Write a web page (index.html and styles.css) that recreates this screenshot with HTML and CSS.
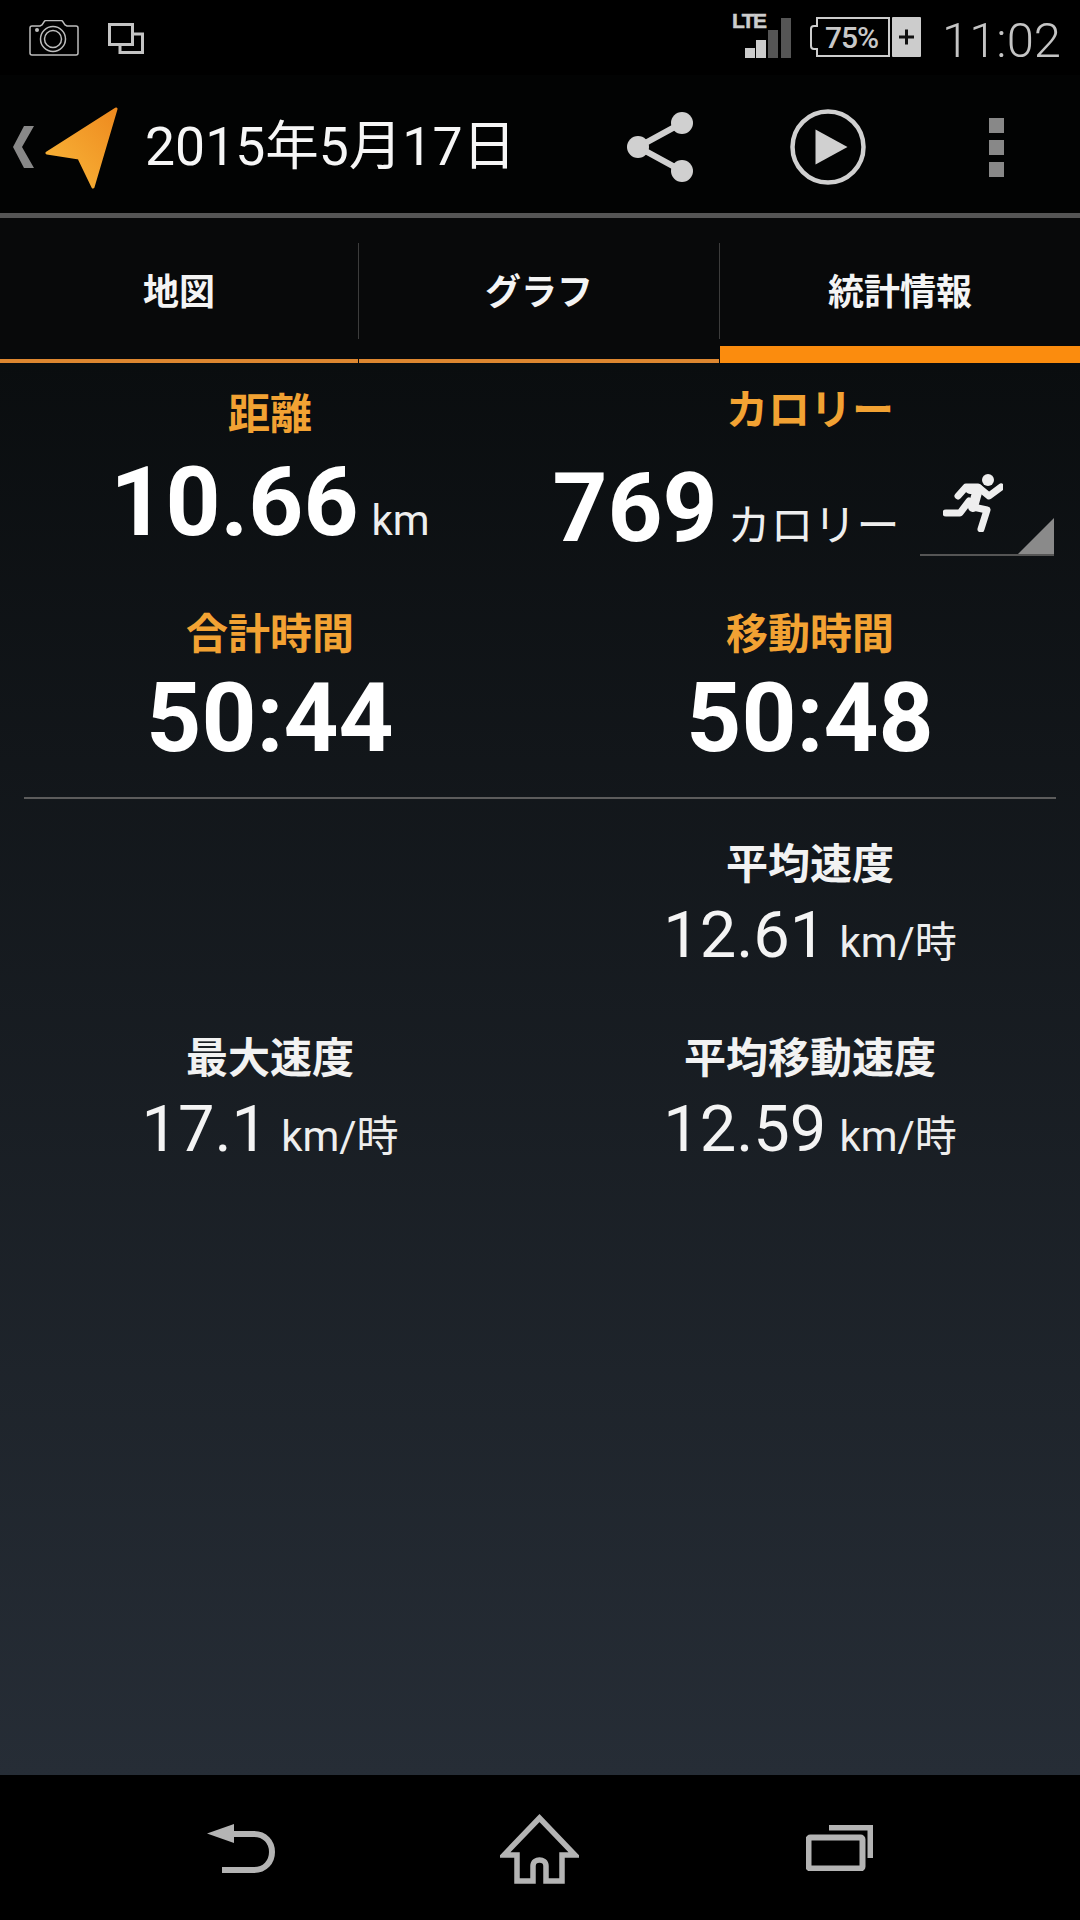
FILE: index.html
```html
<!DOCTYPE html>
<html lang="ja">
<head>
<meta charset="utf-8">
<title>統計情報</title>
<link rel="stylesheet" href="styles.css">
</head>
<body>
<div class="phone">
  <header class="status">
    <svg class="ic-camera" viewBox="0 0 50 36" width="50" height="36"><path d="M3 6h8l2-1 2-3q.5-1.500 2-1.500h15q1.500 0 2 1.500l2 3 2 1h9q2 0 2 2v25q0 2-2 2H3q-2 0-2-2V8q0-2 2-2z"/><circle cx="24" cy="19" r="12.500"/><circle cx="24" cy="19" r="8.500"/><circle class="dot" cx="8" cy="10" r="2"/></svg>
    <svg class="ic-windows" viewBox="0 0 36 31" width="36" height="31"><rect x="1.500" y="1.500" width="23" height="20"/><path d="M12 23v6.500h22.500V11H26"/></svg>
    <div class="status-right">
      <svg class="ic-signal" viewBox="-4 -8 64 54" width="64" height="54"><text x="0" y="16">LTE</text><rect class="on" x="13" y="36" width="10" height="10"/><rect class="on" x="24" y="28" width="10" height="18"/><rect class="off" x="36" y="18" width="10" height="28"/><rect class="off" x="49" y="6" width="10" height="40"/></svg>
      <svg class="ic-battery" viewBox="0 0 112 40" width="112" height="40"><path class="shell" d="M8 1h72v38H8v-7H5q-3 0-3-3V12q0-3 3-3h3z"/><text x="16" y="31">75%</text><rect class="plusbox" x="83" y="0" width="29" height="40" rx="1"/><path class="plus" d="M90 20h15M97.500 12.500v15"/></svg>
      <span class="time">11:02</span>
    </div>
  </header>

  <div class="actionbar">
    <svg class="ic-chevron" viewBox="0 0 21 42" width="21" height="42"><path d="M11 0h10L9 21l12 21H11L0 21z"/></svg>
    <svg class="ic-arrow" viewBox="0 0 74 82" width="74" height="82"><defs><linearGradient id="ag" x1="0" y1="1" x2="1" y2="0"><stop offset="0" stop-color="#f9b83a"/><stop offset="1" stop-color="#ee8a1f"/></linearGradient></defs><path d="M72 2 3 46l32 5 14 29z"/></svg>
    <h1 class="title">2015年5月17日</h1>
    <div class="actions">
      <div class="action"><svg viewBox="0 0 68 72" width="68" height="72"><path class="share-line" d="M56 12 12 36l44 24"/><circle cx="12" cy="36" r="11"/><circle cx="56" cy="12" r="11"/><circle cx="56" cy="60" r="11"/></svg></div>
      <div class="action"><svg viewBox="0 0 76 76" width="76" height="76"><circle class="ring" cx="38" cy="38" r="35.500"/><path d="M25.500 20.500v35l32-17.500z"/></svg></div>
      <div class="action"><div class="overflow"><span></span><span></span><span></span></div></div>
    </div>
  </div>

  <nav class="tabs">
    <div class="tab">地図</div>
    <div class="tab">グラフ</div>
    <div class="tab is-active">統計情報</div>
  </nav>

  <main class="content">
    <section class="primary">
      <div class="stat stat-dist">
        <div class="label accent">距離</div>
        <div class="value big">10.66<span class="unit">km</span></div>
      </div>
      <div class="stat stat-cal">
        <div class="label accent">カロリー</div>
        <div class="value big">769<span class="unit">カロリー</span>
          <div class="spinner">
            <svg viewBox="0 0 60 58" width="60" height="58"><circle class="head" cx="45" cy="6" r="6"/><path class="torso" d="M27 15h8l-5 18"/><path d="M30 33l14 3-6 19"/><path d="M15 22l8-9h12l11 9 12-9"/><path d="M3 39h14l9-12"/></svg>
          </div>
        </div>
      </div>
      <div class="stat">
        <div class="label accent">合計時間</div>
        <div class="value big">50:44</div>
      </div>
      <div class="stat">
        <div class="label accent">移動時間</div>
        <div class="value big">50:48</div>
      </div>
    </section>
    <hr class="rule">
    <section class="secondary">
      <div class="stat"></div>
      <div class="stat">
        <div class="label">平均速度</div>
        <div class="value small">12.61<span class="unit">km/時</span></div>
      </div>
      <div class="stat">
        <div class="label">最大速度</div>
        <div class="value small">17.1<span class="unit">km/時</span></div>
      </div>
      <div class="stat">
        <div class="label">平均移動速度</div>
        <div class="value small">12.59<span class="unit">km/時</span></div>
      </div>
    </section>
  </main>

  <footer class="navbar">
    <svg viewBox="0 0 68 49" width="68" height="49"><path class="fill" d="M0 9.500 27 0v19z"/><path d="M25 10h22c11 0 18 8 18 18s-7 18-18 18H15"/></svg>
    <svg viewBox="0 0 79 70" width="79" height="70"><path d="M39.500 4 4 41h13v26h16V52c0-8 13-8 13 0v15h16V41h13z"/></svg>
    <svg viewBox="0 0 67 46" width="67" height="46"><rect x="2.500" y="12.500" width="54" height="31" rx="2"/><path d="M23 2.500h41.500V33"/></svg>
  </footer>
</div>
</body>
</html>
```
FILE: styles.css
```css
* { box-sizing: border-box; }
html, body { margin: 0; padding: 0; background: #000; }
body { font-family: Roboto, "Noto Sans CJK JP", sans-serif; color: #fff; }
.phone { width: 1080px; height: 1920px; display: flex; flex-direction: column; overflow: hidden; }

/* status bar */
.status { height: 75px; background: #000; display: flex; align-items: flex-start; padding: 20px 19px 0 29px; flex: none; }
.ic-camera { fill: none; stroke: #bdbdbd; stroke-width: 1.500; }
.ic-camera .dot { fill: #bdbdbd; stroke: none; }
.ic-windows { margin: 3px 0 0 29px; fill: none; stroke: #c4c4c4; stroke-width: 3; }
.status-right { margin-left: auto; display: flex; align-items: flex-start; }
.ic-signal { margin-top: -16px; }
.ic-signal text { font: 700 21px "Liberation Sans", sans-serif; fill: #ccc; stroke: #ccc; stroke-width: .5px; letter-spacing: -1.500px; }
.ic-signal .on { fill: #ccc; }
.ic-signal .off { fill: #555; }
.ic-battery { margin: -3px 0 0 17px; }
.ic-battery .shell { fill: none; stroke: #ccc; stroke-width: 2; }
.ic-battery text { font: 500 30px Roboto, sans-serif; fill: #c8c8c8; letter-spacing: -1px; }
.ic-battery .plusbox { fill: #ccc; }
.ic-battery .plus { stroke: #111; stroke-width: 3; fill: none; }
.time { margin: -7px 0 0 21px; font-family: Roboto, sans-serif; font-weight: 300; font-size: 49px; line-height: 56px; color: #c4c4c4; }

/* action bar */
.actionbar { height: 143px; background: #020303; border-bottom: 5px solid #555; display: flex; align-items: center; padding-left: 13px; flex: none; }
.ic-chevron { fill: #888; margin-top: 6px; }
.ic-arrow { margin: 8px 0 0 10px; fill: url(#ag); stroke: url(#ag); stroke-width: 3; stroke-linejoin: round; }
.title { margin: 6px 0 0 27px; font-size: 53.500px; font-weight: 400; line-height: 70px; color: #f6f6f6; white-space: nowrap; }
.actions { margin-left: auto; display: flex; }
.action { width: 168px; display: flex; justify-content: center; align-items: center; margin-top: 6px; fill: #d0d0d0; }
.share-line { fill: none; stroke: #d0d0d0; stroke-width: 6; }
.ring { fill: none; stroke: #d0d0d0; stroke-width: 4.500; }
.overflow { display: flex; flex-direction: column; gap: 7px; margin-top: 1px; }
.overflow span { display: block; width: 15px; height: 15px; background: #888; }

/* tabs */
.tabs { height: 145px; background: #08090a; display: grid; grid-template-columns: 359px 361px 360px; flex: none; }
.tab { position: relative; display: flex; align-items: flex-start; justify-content: center; padding-top: 49px; font-size: 36px; line-height: 52px; font-weight: 700; color: #f4f4f4; border-bottom: 4px solid #dd8630; margin-right: 1px; }
.tab::after { content: ""; position: absolute; top: 25px; right: -1px; width: 1px; height: 96px; background: #3c3c3c; }
.tab:last-child { margin-right: 0; }
.tab:last-child::after { display: none; }
.tab.is-active { border-bottom: 17px solid #fb8c0e; }

/* content */
.content { flex: 1; background: linear-gradient(#0a0d0f, #262d36); }
.primary, .secondary { display: grid; grid-template-columns: 540px 540px; align-items: start; }
.primary { padding-top: 26px; row-gap: 51px; }
.secondary { padding-top: 40px; row-gap: 60px; }
.stat { display: flex; flex-direction: column; align-items: center; }
.label { font-size: 42px; line-height: 52px; font-weight: 700; color: #f2f2f2; }
.accent { color: #f2a233; }
.value { display: flex; align-items: baseline; font-family: Roboto, "Noto Sans CJK JP", sans-serif; white-space: nowrap; }
.big { font-size: 96px; line-height: 100px; font-weight: 700; margin-top: 7px; }
.small { font-size: 65px; line-height: 76px; font-weight: 400; margin-top: 6px; color: #f4f4f4; }
.unit { font-size: 42px; line-height: 1; font-weight: 400; margin-left: 13px; color: #eee; }
.stat-dist .big { margin-top: 11px; }
.stat-cal { margin-top: -4px; }
.stat-cal .value { margin-top: 21px; margin-left: -14px; }
.stat-cal .unit { font-size: 43px; margin-left: 10px; }
.spinner { align-self: flex-end; position: relative; width: 134px; height: 84px; margin: 0 0 2px 20px; border-bottom: 2px solid #555; display: flex; justify-content: center; padding-top: 2px; }
.spinner::after { content: ""; position: absolute; right: 0; bottom: 0; width: 0; height: 0; border-style: solid; border-width: 0 0 36px 36px; border-color: transparent transparent #8a8a8a transparent; }
.spinner svg { fill: none; stroke: #eee; stroke-width: 7; stroke-linecap: round; stroke-linejoin: round; margin-right: 28px; }
.spinner .head { fill: #eee; stroke: none; }
.spinner .torso { stroke-width: 10; }
.rule { margin: 29px 24px 0; border: 0; height: 2px; background: #5c5c5c; }

/* nav */
.navbar { height: 145px; background: #000; flex: none; position: relative; display: grid; grid-template-columns: 207px 68px 225px 79px 227px 67px; }
.navbar svg { fill: none; stroke: #b4b4b4; stroke-width: 6; }
.navbar svg:nth-child(1) { grid-column: 2; margin-top: 49px; }
.navbar svg:nth-child(2) { grid-column: 4; margin-top: 39px; stroke-width: 5.500; }
.navbar svg:nth-child(3) { grid-column: 6; margin-top: 50px; }
.navbar .fill { fill: #b4b4b4; stroke: none; }
```
